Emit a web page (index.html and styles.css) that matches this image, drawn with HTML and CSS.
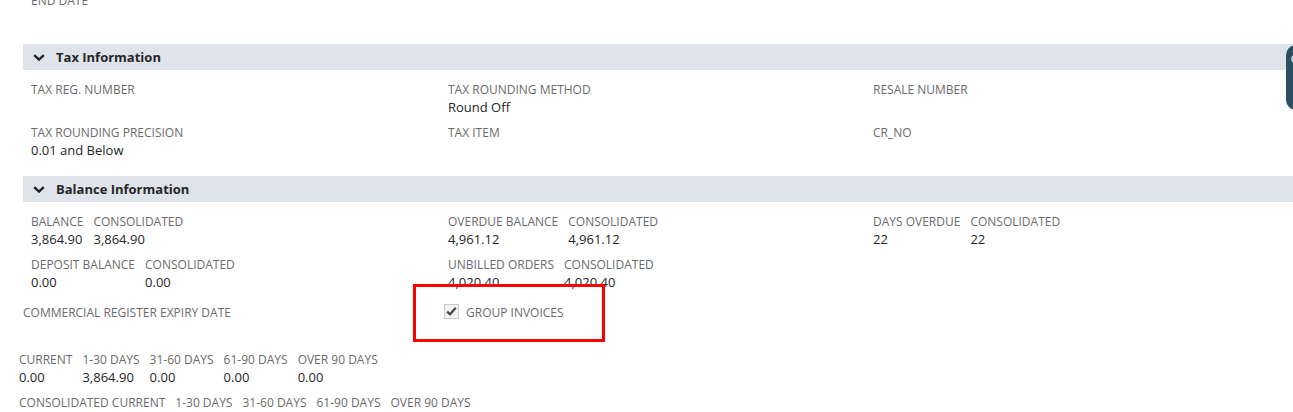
FILE: index.html
```html
<!DOCTYPE html>
<html>
<head>
<meta charset="utf-8">
<link rel="stylesheet" href="styles.css">
</head>
<body>
<div class="page">
  <div class="section-body top-block">
    <div class="field"><div class="lbl">END DATE</div><div class="val"></div></div>
  </div>

  <div class="section-head">
    <svg class="chev" width="12" height="7" viewBox="0 0 12 7"><path d="M1.2 1.2 L6 5.6 L10.8 1.2" fill="none" stroke="#222" stroke-width="2.4"/></svg>
    <span>Tax Information</span>
  </div>
  <div class="section-body grid3">
    <div class="field"><div class="lbl">TAX REG. NUMBER</div><div class="val"></div></div>
    <div class="field"><div class="lbl">TAX ROUNDING METHOD</div><div class="val">Round Off</div></div>
    <div class="field"><div class="lbl">RESALE NUMBER</div><div class="val"></div></div>
    <div class="field"><div class="lbl">TAX ROUNDING PRECISION</div><div class="val">0.01 and Below</div></div>
    <div class="field"><div class="lbl">TAX ITEM</div><div class="val"></div></div>
    <div class="field"><div class="lbl">CR_NO</div><div class="val"></div></div>
  </div>

  <div class="section-head">
    <svg class="chev" width="12" height="7" viewBox="0 0 12 7"><path d="M1.2 1.2 L6 5.6 L10.8 1.2" fill="none" stroke="#222" stroke-width="2.4"/></svg>
    <span>Balance Information</span>
  </div>
  <div class="section-body grid3">
    <div class="field pair">
      <div class="sub"><div class="lbl">BALANCE</div><div class="val">3,864.90</div></div>
      <div class="sub"><div class="lbl">CONSOLIDATED</div><div class="val">3,864.90</div></div>
    </div>
    <div class="field pair">
      <div class="sub"><div class="lbl">OVERDUE BALANCE</div><div class="val">4,961.12</div></div>
      <div class="sub"><div class="lbl">CONSOLIDATED</div><div class="val">4,961.12</div></div>
    </div>
    <div class="field pair">
      <div class="sub"><div class="lbl">DAYS OVERDUE</div><div class="val">22</div></div>
      <div class="sub"><div class="lbl">CONSOLIDATED</div><div class="val">22</div></div>
    </div>
    <div class="field pair">
      <div class="sub"><div class="lbl">DEPOSIT BALANCE</div><div class="val">0.00</div></div>
      <div class="sub"><div class="lbl">CONSOLIDATED</div><div class="val">0.00</div></div>
    </div>
    <div class="field pair">
      <div class="sub"><div class="lbl">UNBILLED ORDERS</div><div class="val">4,020.40</div></div>
      <div class="sub"><div class="lbl">CONSOLIDATED</div><div class="val">4,020.40</div></div>
    </div>
    <div class="field"></div>
    <div class="inline-row crd"><span class="lbl">COMMERCIAL REGISTER EXPIRY DATE</span></div>
    <div class="inline-row chk">
      <svg class="cbox" width="15" height="15" viewBox="0 0 15 15"><rect x="0.5" y="0.5" width="14" height="14" fill="#f4f4f4" stroke="#c9c9c9"/><path d="M3.2 7.6 L6 10.3 L11.8 3.8" fill="none" stroke="#4a4a4a" stroke-width="2.3"/></svg>
      <span class="lbl">GROUP INVOICES</span>
    </div>
    <div class="inline-row"></div>
  </div>

  <div class="aging">
    <div class="aging-row">
      <div class="sub"><div class="lbl">CURRENT</div><div class="val">0.00</div></div>
      <div class="sub"><div class="lbl">1-30 DAYS</div><div class="val">3,864.90</div></div>
      <div class="sub"><div class="lbl">31-60 DAYS</div><div class="val">0.00</div></div>
      <div class="sub"><div class="lbl">61-90 DAYS</div><div class="val">0.00</div></div>
      <div class="sub"><div class="lbl">OVER 90 DAYS</div><div class="val">0.00</div></div>
    </div>
    <div class="aging-row">
      <div class="sub"><div class="lbl">CONSOLIDATED CURRENT</div><div class="val"></div></div>
      <div class="sub"><div class="lbl">1-30 DAYS</div><div class="val"></div></div>
      <div class="sub"><div class="lbl">31-60 DAYS</div><div class="val"></div></div>
      <div class="sub"><div class="lbl">61-90 DAYS</div><div class="val"></div></div>
      <div class="sub"><div class="lbl">OVER 90 DAYS</div><div class="val"></div></div>
    </div>
  </div>
</div>

<div class="highlight"></div>
<div class="side-tab"><span class="side-arc"></span></div>
</body>
</html>
```

FILE: styles.css
```css
html, body {
  margin: 0;
  padding: 0;
  background: #ffffff;
  overflow: hidden;
}
body {
  position: relative;
  width: 1293px;
  height: 412px;
  font-family: "Open Sans", "Liberation Sans", sans-serif;
  color: #262626;
}
.page {
  padding-left: 23px;
  width: 1300px;
}
.top-block {
  margin-top: -19px;
}
.section-head {
  height: 26px;
  background: #dfe3ea;
  display: flex;
  align-items: center;
  padding-left: 10px;
  font-size: 13px;
  font-weight: 700;
  color: #262626;
}
.chev {
  display: block;
  margin-right: 11px;
}
.section-body {
  padding: 10px 0 10px 8px;
}
.grid3 {
  display: grid;
  grid-template-columns: 417px 425px 1fr;
}
.field {
  margin-bottom: 7px;
}
.lbl {
  display: block;
  font-size: 12px;
  line-height: 16px;
  padding-top: 2px;
  color: #6b6b6b;
  white-space: nowrap;
}
.val {
  font-size: 13px;
  line-height: 18px;
  min-height: 18px;
  color: #262626;
  white-space: nowrap;
}
.pair {
  display: flex;
  gap: 10px;
}
.inline-row {
  height: 28px;
  display: flex;
  align-items: center;
}
.crd {
  margin-left: -8px;
}
.chk {
  margin-left: -4px;
}
.cbox {
  display: block;
  margin-right: 7px;
  margin-top: -1px;
}
.aging {
  margin-left: -4px;
  margin-top: 14px;
}
.aging-row {
  display: flex;
  gap: 10px;
  margin-bottom: 7px;
}
.highlight {
  position: absolute;
  left: 413px;
  top: 284px;
  width: 192px;
  height: 58px;
  box-sizing: border-box;
  border: 3px solid #ff0000;
}
.side-tab {
  position: absolute;
  left: 1286px;
  top: 45px;
  width: 20px;
  height: 65px;
  border-radius: 10px;
  background: #2b5064;
  overflow: hidden;
}
.side-arc {
  position: absolute;
  left: 5px;
  top: 9px;
  width: 10px;
  height: 10px;
  border-left: 2px solid #dfe8ee;
  border-radius: 50%;
  opacity: 0.8;
}
```
